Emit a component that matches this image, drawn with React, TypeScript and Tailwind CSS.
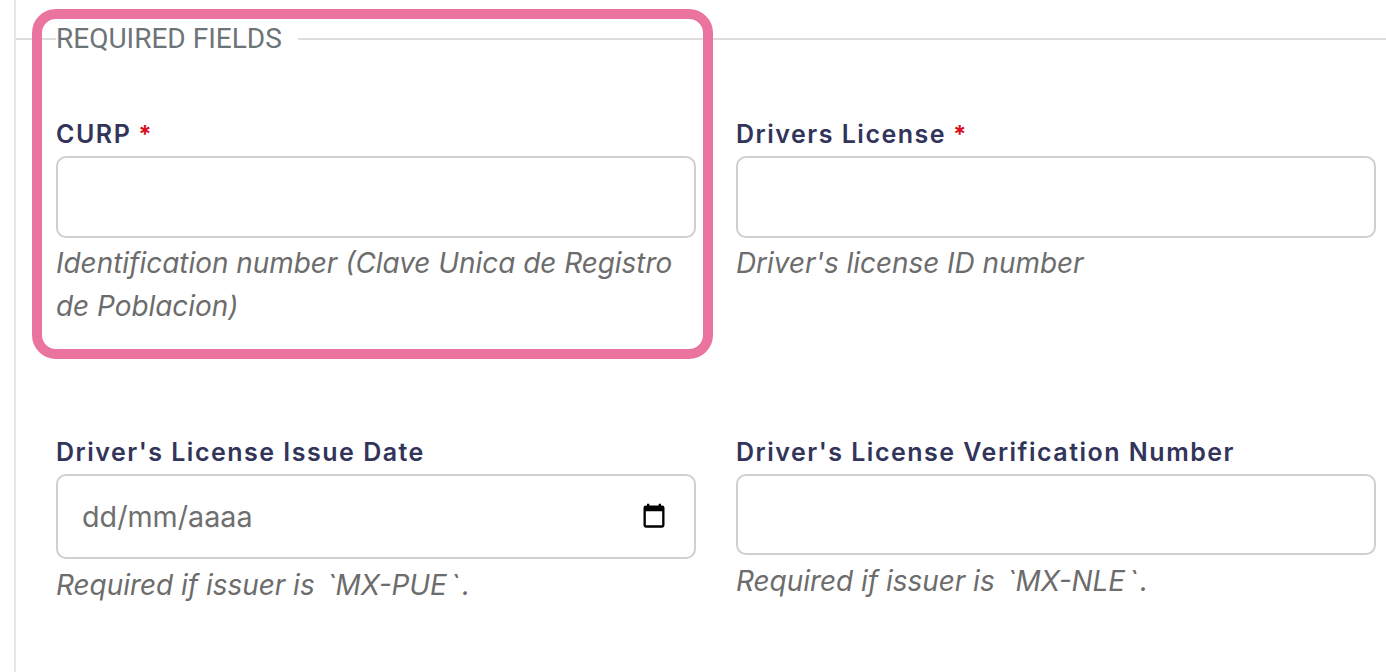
const helpClass = "text-[27.9px] leading-[43px] italic text-[#6c6c6c] [font-family:Inter,'Liberation_Sans',sans-serif]";
const labelClass = "block h-[40px] text-[25px] leading-[36px] font-semibold tracking-[1.5px] text-[#32345a] [font-family:Inter,'Liberation_Sans',sans-serif]";
const inputClass = "block w-full rounded-[10px] border-2 border-[#cfcfcf] bg-white outline-none";

function Issuer({ code }: { code: string }) {
  return (
    <>
      Required if issuer is <span className="ml-[4px]">`</span>
      {code}
      <span className="ml-[3px]">`</span>
      <span className="ml-[3px]">.</span>
    </>
  );
}

function Field({ label, required, help, tall }: { label: string; required?: boolean; help: React.ReactNode; tall?: boolean }) {
  return (
    <div>
      <label className={labelClass}>
        {label}
        {required ? <span className="ml-[7px] text-[24px] font-bold text-[#d8101f]">*</span> : null}
      </label>
      <input type="text" className={`${inputClass} ${tall ? "h-[82px]" : "h-[81px]"}`} />
      <p className={`${helpClass} ${tall ? "mt-[4px]" : "mt-[5px]"}`}>{help}</p>
    </div>
  );
}

function DateField() {
  return (
    <div>
      <label className={labelClass}>Driver's License Issue Date</label>
      <div className={`${inputClass} flex h-[85px] items-center justify-between pl-[24px] pr-[26px]`}>
        <span className="text-[28.7px] text-[#6f6f6f] [font-family:Inter,'Liberation_Sans',sans-serif]">dd/mm/aaaa</span>
        <svg width="28" height="28" viewBox="0 0 24 24" className="-mt-[2px] text-black">
          <path
            fill="currentColor"
            d="M19 3h-1V1.5h-2V3H8V1.5H6V3H5a2 2 0 0 0-2 2v15a2 2 0 0 0 2 2h14a2 2 0 0 0 2-2V5a2 2 0 0 0-2-2Zm0 17H5V8h14v12Z"
          />
        </svg>
      </div>
      <p className={`${helpClass} mt-[5px]`}>
        <Issuer code="MX-PUE" />
      </p>
    </div>
  );
}

export default function App() {
  return (
    <div className="relative h-[672px] w-[1386px] overflow-hidden bg-white">
      <div className="ml-[14px] h-full border-l-2 border-[#e6e6e6] pt-[23px]">
        <fieldset className="border-t-2 border-[#dcdcdc] pl-[40px] pr-[10px]">
          <legend className="pr-[16px] text-[28px] leading-[32px] text-[#6c7478] [font-family:Roboto,'Liberation_Sans',sans-serif]">
            REQUIRED FIELDS
          </legend>
          <div className="mt-[61px] grid grid-cols-2 gap-x-[40px] gap-y-[106px]">
            <Field label="CURP" required tall help="Identification number (Clave Unica de Registro de Poblacion)" />
            <Field label="Drivers License" required tall help="Driver's license ID number" />
            <DateField />
            <Field label="Driver's License Verification Number" help={<Issuer code="MX-NLE" />} />
          </div>
        </fieldset>
      </div>
      {/* highlight drawn over the first field */}
      <div className="pointer-events-none absolute left-[32px] top-[9px] h-[350px] w-[681px] rounded-[24px] border-[10px] border-[#ea749f]" />
    </div>
  );
}
